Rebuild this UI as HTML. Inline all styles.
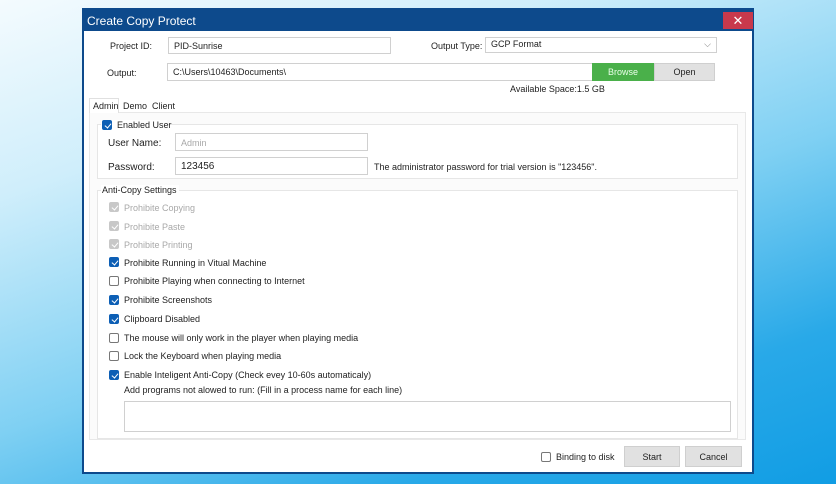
<!DOCTYPE html>
<html><head><meta charset="utf-8"><style>
*{margin:0;padding:0;box-sizing:border-box}
body{width:836px;height:484px;overflow:hidden;position:relative;font-family:"Liberation Sans",sans-serif;font-size:9px;color:#222;
background:linear-gradient(160deg,#f4fbfe 0%,#cfeefb 25%,#7fd0f3 55%,#29a9e8 80%,#119de4 100%)}
.a{position:absolute}
.dlg{left:82px;top:8px;width:672px;height:466px;background:#fff;border:2px solid #0d4a8c;border-top:none}
.title{left:82px;top:8px;width:672px;height:23px;background:#0d4a8c;color:#fff;font-size:12px;padding:6px 0 0 5px}
.close{left:723px;top:12px;width:30px;height:17px;background:#c8394c;color:#fff;text-align:center;font-size:13px;line-height:17px}
.inp{background:#fff;border:1px solid #d0d0d0;padding:3px 5px 0;font-size:9px}
.lbl{font-size:9px}
.grp{border:1px solid #e6e6e6;background:#fff}
.cb{width:10px;height:10px;border-radius:2px;border:1px solid #777;background:#fff}
.cb.on{background:#0d5fb5;border-color:#0d5fb5}
.cb.on::after,.cb.dis::after{content:"";position:absolute;left:2.5px;top:1px;width:3px;height:5px;border:solid #fff;border-width:0 1.3px 1.3px 0;transform:rotate(40deg)}
.cb.dis{background:#c8c8c8;border-color:#c8c8c8}
.gray{color:#a8a8a8}
.btn{background:#e1e1e1;border:1px solid #cfcfcf;text-align:center;font-size:9px}
</style></head><body>
<div class="a dlg"></div>
<div class="a title">Create Copy Protect</div>
<div class="a close">✕</div>

<div class="a lbl" style="left:110px;top:41px">Project ID:</div>
<div class="a inp" style="left:168px;top:37px;width:223px;height:17px">PID-Sunrise</div>
<div class="a lbl" style="left:431px;top:41px">Output Type:</div>
<div class="a inp" style="left:485px;top:37px;width:232px;height:16px;padding-top:1px">GCP Format<span style="position:absolute;right:5px;top:1px;color:#777">⌵</span></div>

<div class="a lbl" style="left:107px;top:68px">Output:</div>
<div class="a inp" style="left:167px;top:63px;width:426px;height:18px">C:\Users\10463\Documents\</div>
<div class="a btn" style="left:592px;top:63px;width:62px;height:18px;background:#4ab04a;border-color:#4ab04a;color:#eaffea;line-height:17px">Browse</div>
<div class="a btn" style="left:654px;top:63px;width:61px;height:18px;line-height:17px">Open</div>
<div class="a lbl" style="left:510px;top:84px">Available Space:1.5 GB</div>

<div class="a" style="left:89px;top:112px;width:657px;height:328px;background:#fbfbfb;border:1px solid #e8e8e8"></div>
<div class="a" style="left:89px;top:98px;width:30px;height:15px;background:#fff;border:1px solid #e0e0e0;border-bottom:none;padding:2px 0 0 3px">Admin</div>
<div class="a" style="left:123px;top:101px">Demo</div>
<div class="a" style="left:152px;top:101px">Client</div>

<div class="a grp" style="left:97px;top:124px;width:641px;height:55px"></div>
<div class="a" style="left:101px;top:120px;width:66px;height:10px;background:#fff"></div>
<div class="a cb on" style="left:102px;top:120px"></div>
<div class="a" style="left:117px;top:120px">Enabled User</div>
<div class="a" style="left:108px;top:138px;font-size:10px">User Name:</div>
<div class="a inp gray" style="left:175px;top:133px;width:193px;height:18px;padding-top:4px">Admin</div>
<div class="a" style="left:108px;top:162px;font-size:10px">Password:</div>
<div class="a inp" style="left:175px;top:157px;width:193px;height:18px;font-size:10px;padding-top:3px">123456</div>
<div class="a" style="left:374px;top:162px">The administrator password for trial version is "123456".</div>

<div class="a grp" style="left:97px;top:190px;width:641px;height:249px"></div>
<div class="a" style="left:101px;top:185px;background:#fff;padding:0 2px 0 1px">Anti-Copy Settings</div>

<div class="a cb dis" style="left:109px;top:202px"></div><div class="a gray" style="left:124px;top:203px">Prohibite Copying</div>
<div class="a cb dis" style="left:109px;top:221px"></div><div class="a gray" style="left:124px;top:222px">Prohibite Paste</div>
<div class="a cb dis" style="left:109px;top:239px"></div><div class="a gray" style="left:124px;top:240px">Prohibite Printing</div>
<div class="a cb on" style="left:109px;top:257px"></div><div class="a" style="left:124px;top:258px">Prohibite Running in Vitual Machine</div>
<div class="a cb" style="left:109px;top:276px"></div><div class="a" style="left:124px;top:276px">Prohibite Playing when connecting to Internet</div>
<div class="a cb on" style="left:109px;top:295px"></div><div class="a" style="left:124px;top:295px">Prohibite Screenshots</div>
<div class="a cb on" style="left:109px;top:314px"></div><div class="a" style="left:124px;top:314px">Clipboard Disabled</div>
<div class="a cb" style="left:109px;top:333px"></div><div class="a" style="left:124px;top:333px">The mouse will only work in the player when playing media</div>
<div class="a cb" style="left:109px;top:351px"></div><div class="a" style="left:124px;top:351px">Lock the Keyboard when playing media</div>
<div class="a cb on" style="left:109px;top:370px"></div><div class="a" style="left:124px;top:370px">Enable Inteligent Anti-Copy (Check evey 10-60s automaticaly)</div>
<div class="a" style="left:124px;top:385px">Add programs not alowed to run: (Fill in a process name for each line)</div>
<div class="a inp" style="left:124px;top:401px;width:607px;height:31px"></div>

<div class="a cb" style="left:541px;top:452px"></div>
<div class="a" style="left:556px;top:452px">Binding to disk</div>
<div class="a btn" style="left:624px;top:446px;width:56px;height:21px;line-height:20px">Start</div>
<div class="a btn" style="left:685px;top:446px;width:57px;height:21px;line-height:20px">Cancel</div>
</body></html>
